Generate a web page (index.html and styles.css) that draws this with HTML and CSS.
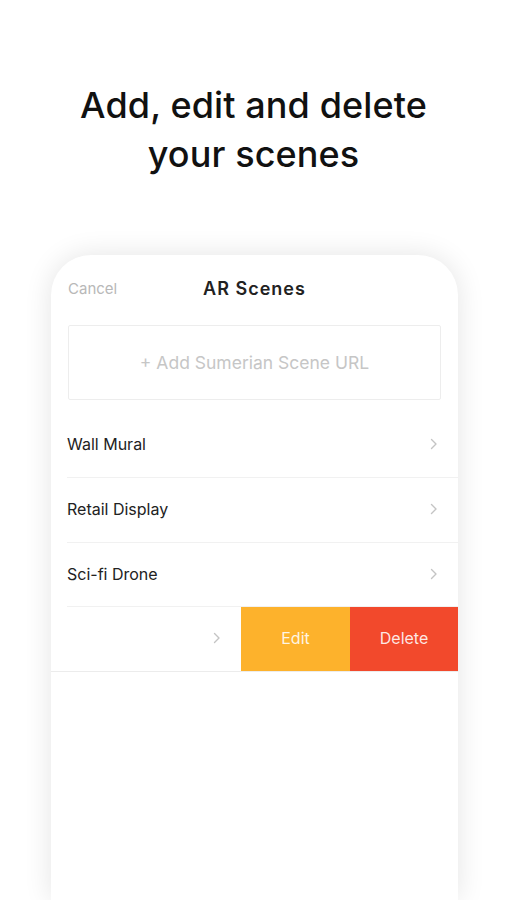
FILE: index.html
```html
<!DOCTYPE html>
<html lang="en">
<head>
<meta charset="utf-8">
<title>AR Scenes</title>
<link rel="stylesheet" href="styles.css">
</head>
<body>
<main class="page">
  <h1 class="headline">Add, edit and delete<br>your scenes</h1>
  <section class="card">
    <header class="card-header">
      <span class="cancel">Cancel</span>
      <span class="card-title">AR Scenes</span>
      <span class="spacer"></span>
    </header>
    <div class="add-box">+ Add Sumerian Scene URL</div>
    <ul class="scene-list">
      <li class="scene-row">
        <span class="scene-name">Wall Mural</span>
        <svg class="chev" width="8" height="12" viewBox="0 0 8 12"><path d="M1.5 1.5 L6 6 L1.5 10.5" fill="none" stroke="#c4c4c4" stroke-width="1.4" stroke-linecap="round" stroke-linejoin="round"/></svg>
      </li>
      <li class="scene-row">
        <span class="scene-name">Retail Display</span>
        <svg class="chev" width="8" height="12" viewBox="0 0 8 12"><path d="M1.5 1.5 L6 6 L1.5 10.5" fill="none" stroke="#c4c4c4" stroke-width="1.4" stroke-linecap="round" stroke-linejoin="round"/></svg>
      </li>
      <li class="scene-row last-plain">
        <span class="scene-name">Sci-fi Drone</span>
        <svg class="chev" width="8" height="12" viewBox="0 0 8 12"><path d="M1.5 1.5 L6 6 L1.5 10.5" fill="none" stroke="#c4c4c4" stroke-width="1.4" stroke-linecap="round" stroke-linejoin="round"/></svg>
      </li>
      <li class="scene-row swiped">
        <div class="slide">
          <span class="scene-name"></span>
          <svg class="chev" width="8" height="12" viewBox="0 0 8 12"><path d="M1.5 1.5 L6 6 L1.5 10.5" fill="none" stroke="#c4c4c4" stroke-width="1.4" stroke-linecap="round" stroke-linejoin="round"/></svg>
        </div>
        <div class="action edit">Edit</div>
        <div class="action delete">Delete</div>
      </li>
    </ul>
  </section>
</main>
</body>
</html>
```
FILE: styles.css
```css
* { box-sizing: border-box; }
html, body {
  margin: 0;
  padding: 0;
  background: #ffffff;
  height: 900px;
  overflow: hidden;
}
body {
  font-family: Inter, "Noto Sans", sans-serif;
  color: #1c1c1c;
}
.page {
  display: flex;
  flex-direction: column;
  align-items: center;
  height: 900px;
}
.headline {
  margin: 81px 0 0;
  font-size: 36px;
  line-height: 49px;
  font-weight: 500;
  text-align: center;
  color: #111;
  letter-spacing: 0.1px;
}
.card {
  margin-top: 76px;
  margin-left: 2px;
  width: 407px;
  flex: 1 1 auto;
  background: #fff;
  border-radius: 40px 40px 0 0;
  box-shadow: 0 0 28px rgba(0,0,0,0.11);
  overflow: hidden;
  display: flex;
  flex-direction: column;
}
.card-header {
  height: 66px;
  display: flex;
  align-items: center;
  justify-content: space-between;
  padding: 0 17px;
}
.cancel {
  width: 80px;
  font-size: 15px;
  color: #b8b8b8;
}
.spacer { width: 80px; }
.card-title {
  font-size: 18px;
  font-weight: 600;
  color: #222;
  letter-spacing: 1px;
}
.add-box {
  margin: 4px 17px 0;
  height: 75px;
  border: 1px solid #ededed;
  border-radius: 2px;
  display: flex;
  align-items: center;
  justify-content: center;
  font-size: 17.5px;
  color: #c6c6c6;
}
.scene-list {
  list-style: none;
  margin: 13px 0 0;
  padding: 0;
}
.scene-row {
  height: 65px;
  margin-left: 16px;
  padding-right: 20px;
  padding-bottom: 2px;
  display: flex;
  align-items: center;
  justify-content: space-between;
  border-bottom: 1px solid #f1f1f1;
}
.scene-row.last-plain {
  height: 64px;
}
.scene-name {
  font-size: 16px;
  color: #222;
}
.chev { display: block; }
.scene-row.swiped {
  margin-left: 0;
  padding-right: 0;
  padding-bottom: 0;
  justify-content: flex-start;
  border-bottom: 1px solid #ececec;
}
.slide {
  flex: 0 0 407px;
  margin-left: -217px;
  height: 100%;
  padding: 0 20px 2px 16px;
  display: flex;
  align-items: center;
  justify-content: space-between;
}
.action {
  height: 100%;
  padding-bottom: 2px;
  display: flex;
  align-items: center;
  justify-content: center;
  font-size: 16px;
  color: rgba(255,255,255,0.88);
}
.edit {
  flex: 0 0 109px;
  background: #fdb22c;
}
.delete {
  flex: 0 0 108px;
  background: #f2492c;
}
```
